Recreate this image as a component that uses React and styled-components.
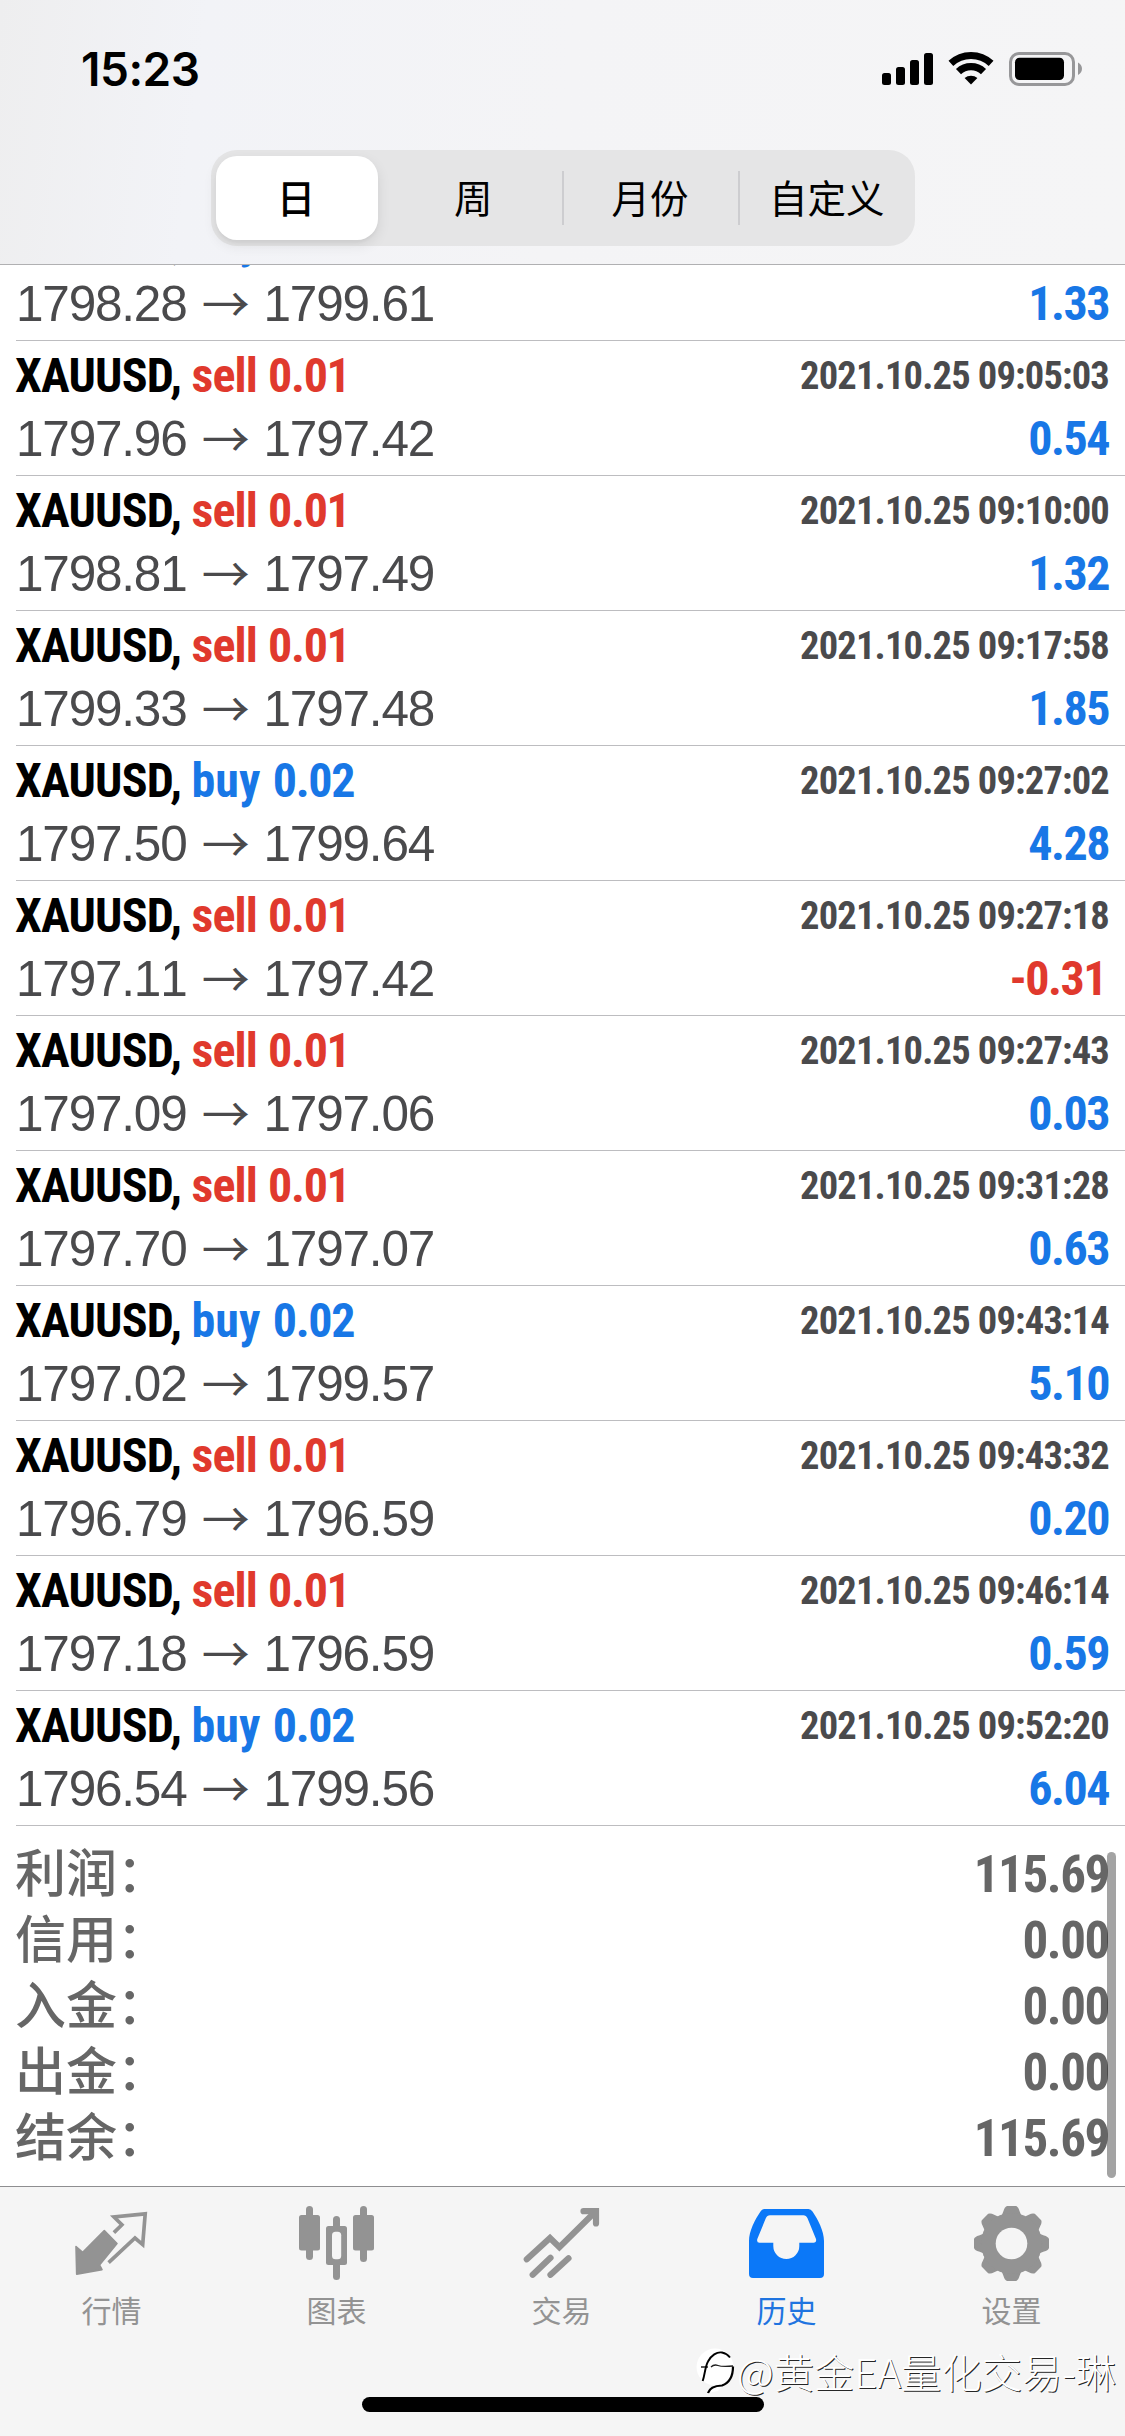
import styled, { createGlobalStyle, css } from 'styled-components';

const BLUE = '#1877e6';
const RED = '#e0392d';

const deals = [
  { side: 'buy', volume: '0.01', open: '1798.28', close: '1799.61', time: '2021.10.25 09:04:20', profit: '1.33' },
  { side: 'sell', volume: '0.01', open: '1797.96', close: '1797.42', time: '2021.10.25 09:05:03', profit: '0.54' },
  { side: 'sell', volume: '0.01', open: '1798.81', close: '1797.49', time: '2021.10.25 09:10:00', profit: '1.32' },
  { side: 'sell', volume: '0.01', open: '1799.33', close: '1797.48', time: '2021.10.25 09:17:58', profit: '1.85' },
  { side: 'buy', volume: '0.02', open: '1797.50', close: '1799.64', time: '2021.10.25 09:27:02', profit: '4.28' },
  { side: 'sell', volume: '0.01', open: '1797.11', close: '1797.42', time: '2021.10.25 09:27:18', profit: '-0.31' },
  { side: 'sell', volume: '0.01', open: '1797.09', close: '1797.06', time: '2021.10.25 09:27:43', profit: '0.03' },
  { side: 'sell', volume: '0.01', open: '1797.70', close: '1797.07', time: '2021.10.25 09:31:28', profit: '0.63' },
  { side: 'buy', volume: '0.02', open: '1797.02', close: '1799.57', time: '2021.10.25 09:43:14', profit: '5.10' },
  { side: 'sell', volume: '0.01', open: '1796.79', close: '1796.59', time: '2021.10.25 09:43:32', profit: '0.20' },
  { side: 'sell', volume: '0.01', open: '1797.18', close: '1796.59', time: '2021.10.25 09:46:14', profit: '0.59' },
  { side: 'buy', volume: '0.02', open: '1796.54', close: '1799.56', time: '2021.10.25 09:52:20', profit: '6.04' },
];

const totals = [
  ['利润：', '115.69'],
  ['信用：', '0.00'],
  ['入金：', '0.00'],
  ['出金：', '0.00'],
  ['结余：', '115.69'],
];

const periods = ['日', '周', '月份', '自定义'];

function StatusIcons() {
  return (
    <svg width="204" height="38" viewBox="0 0 204 38">
      <rect x="2" y="23" width="9" height="12" rx="2.5" />
      <rect x="16" y="17" width="9" height="18" rx="2.5" />
      <rect x="30" y="10" width="9" height="25" rx="2.5" />
      <rect x="44" y="3" width="9" height="32" rx="2.5" />
      <path d="M70.9 13.4A29.5 29.5 0 0 1 111.1 13.4" fill="none" stroke="#000" strokeWidth="7" />
      <path d="M78.5 21.6A18.3 18.3 0 0 1 103.5 21.6" fill="none" stroke="#000" strokeWidth="7.4" />
      <path d="M84.6 28A10 10 0 0 1 97.4 28L91 34.6Z" />
      <rect x="130.5" y="3.5" width="63" height="31" rx="8.5" fill="none" stroke="#979799" strokeWidth="3" />
      <rect x="135" y="7.7" width="49" height="22.3" rx="4.5" />
      <path d="M198 12.5Q202 15 202 18.8T198 25Z" fill="#979799" />
    </svg>
  );
}

const tabs = [
  {
    label: '行情',
    icon: (
      <>
        <path
          d="M5 46.5L11.7 52.3L33.3 30.5L46 43.5L28.5 65L31 69.6L5.7 74.2Z"
          fill="currentColor"
          stroke="currentColor"
          strokeWidth="1.6"
          strokeLinejoin="round"
        />
        <path d="M42.9 32.6L50.9 24.8L43 17L74.2 13.8L71.7 44.6L64 38L37.6 62.6" fill="none" stroke="currentColor" strokeWidth="3.7" />
      </>
    ),
  },
  {
    label: '图表',
    icon: (
      <g fill="currentColor">
        <rect x="10" y="6" width="7" height="54" rx="3.5" />
        <rect x="3" y="15" width="21" height="35.5" rx="2.5" />
        <rect x="37" y="16" width="7" height="64" rx="3.5" />
        <rect x="30" y="26" width="21" height="39" rx="2.5" />
        <rect x="36" y="31.7" width="9.2" height="27.6" rx="3.5" fill="#f5f5f5" />
        <rect x="64" y="6" width="7" height="56" rx="3.5" />
        <rect x="57" y="15" width="21" height="35.5" rx="2.5" />
      </g>
    ),
  },
  {
    label: '交易',
    icon: (
      <g fill="none" stroke="currentColor" strokeWidth="6.2" strokeLinecap="round">
        <path d="M5.8 59.3L29 38L38.4 47.2L73.5 12.5" />
        <path d="M62.5 11.2H75V23.5" />
        <path d="M11.7 74.8L29.5 57.8M29.5 74.8L47.5 58.3" />
      </g>
    ),
  },
  {
    label: '历史',
    active: true,
    icon: (
      <path
        fillRule="evenodd"
        fill="#0b78f8"
        d="M18.5 9H62.5Q65 9 66.5 11.5C72 19.5 78 31 78 41V74Q78 78 74 78H7Q3 78 3 74V41C3 31 9 19.5 14.5 11.5Q16 9 18.5 9ZM24 15.3Q21 15.3 19.8 18.3L11.3 39Q10.4 42.7 13.5 42.7H27.3V46A13 13 0 0 0 53.3 46V42.7H67.5Q70.8 42.7 70 39L61.5 18.3Q60.2 15.3 57.3 15.3Z"
      />
    ),
  },
  {
    label: '设置',
    icon: (
      <g>
        {[0, 45, 90, 135].map((a) => (
          <path
            key={a}
            transform={`rotate(${a} 40.5 43.5)`}
            fill="currentColor"
            d="M36 6H45Q47.5 7 48.500 11L50.500 16L55 30V57L50.500 71L48.500 76Q47.500 80 45 81H36Q33.500 80 32.500 76L30.500 71L26 57V30L30.500 16L32.500 11Q33.500 7 36 6Z"
          />
        ))}
        <circle cx="40.5" cy="43.5" r="30.5" fill="currentColor" />
        <circle cx="40.5" cy="43.5" r="15.8" fill="#f5f5f5" />
      </g>
    ),
  },
];

function App() {
  return (
    <>
      <GlobalStyle />
      <Screen>
        <Header>
          <StatusBar>
            <Clock>15:23</Clock>
            <StatusIcons />
          </StatusBar>
          <Segmented>
            {periods.map((name, i) => (
              <Segment key={name} $active={i === 0} $divided={i > 1}>
                {name}
              </Segment>
            ))}
          </Segmented>
        </Header>

        <History>
          <Deals>
            {deals.map((deal) => (
              <Deal key={deal.time}>
                <Line $height={68}>
                  <Symbol>
                    XAUUSD,{' '}
                    <Side $side={deal.side}>
                      {deal.side} <Volume>{deal.volume}</Volume>
                    </Side>
                  </Symbol>
                  <Time>{deal.time}</Time>
                </Line>
                <Line $height={58}>
                  <Prices>
                    <span>{deal.open}</span>
                    <Arrow>→</Arrow>
                    <span>{deal.close}</span>
                  </Prices>
                  <Profit $loss={deal.profit.startsWith('-')}>{deal.profit}</Profit>
                </Line>
              </Deal>
            ))}
          </Deals>
          <Totals>
            {totals.map(([label, value]) => (
              <Total key={label}>
                <TotalLabel>{label}</TotalLabel>
                <TotalValue>{value}</TotalValue>
              </Total>
            ))}
          </Totals>
          <ScrollThumb />
        </History>

        <TabBar>
          {tabs.map((tab) => (
            <Tab key={tab.label} $active={tab.active}>
              <svg width="83" height="84" viewBox="0 0 83 84">
                {tab.icon}
              </svg>
              <TabLabel>{tab.label}</TabLabel>
            </Tab>
          ))}
          <HomeIndicator />
          <Watermark>
            <svg width="41" height="48" viewBox="0 0 41 48">
              <circle cx="19" cy="20" r="18.5" fill="#fff" />
              <path d="M12 46Q17 37 30 35L22 44Z" fill="#fff" />
              <path d="M5 20H12M15 20Q18 17 22 18.500T37 19" fill="none" stroke="#222" strokeWidth="1.3" />
              <path d="M6.700 34C9 27 9 20 12 14.500C15 8.500 21 4.500 26 5.500Q31 6.500 34 10.500" fill="none" stroke="#000" strokeWidth="1.900" />
              <path d="M37 19.500C37 29 33 36 26 38.500Q14 39 12 46" fill="none" stroke="#000" strokeWidth="2.200" />
            </svg>
            @黄金EA量化交易-琳
          </Watermark>
        </TabBar>
      </Screen>
    </>
  );
}

export default App;

const GlobalStyle = createGlobalStyle`
  * {
    box-sizing: border-box;
  }
  body {
    margin: 0;
    background: #fff;
  }
`;

const condensed = css`
  font-family: 'Roboto Condensed', Roboto, 'Liberation Sans', sans-serif;
  font-weight: 700;
`;

const Screen = styled.div`
  width: 1125px;
  height: 2436px;
  display: flex;
  flex-direction: column;
  overflow: hidden;
  background: #fff;
  font-family: 'Liberation Sans', 'Noto Sans CJK SC', sans-serif;
`;

const Header = styled.header`
  flex: none;
  height: 265px;
  border-bottom: 1px solid #b0b0b2;
  background: linear-gradient(97deg, #eeeeef 0%, #f2f3f7 18%, #f4f4f6 50%, #f5f5f6 100%);
`;

const StatusBar = styled.div`
  height: 150px;
  padding: 50px 41px 0 81px;
  display: flex;
  align-items: flex-start;
  justify-content: space-between;
`;

const Clock = styled.div`
  font: 600 46px/38px Inter, sans-serif;
  letter-spacing: -0.5px;
`;

const Segmented = styled.div`
  width: 704px;
  height: 96px;
  margin-left: 211px;
  padding: 6px 0 6px 5px;
  display: flex;
  align-items: center;
  border-radius: 26px;
  background: #e5e5e6;
`;

const Segment = styled.div`
  flex: 1;
  height: 54px;
  padding: 0 2px 4px 0;
  display: flex;
  align-items: center;
  justify-content: center;
  font: 400 38.5px/50px 'Noto Sans CJK SC', sans-serif;
  color: #000;
  border-left: 2px solid ${(p) => (p.$divided ? '#cdcdd0' : 'transparent')};
  ${(p) =>
    p.$active &&
    css`
      flex: none;
      width: 162px;
      height: 84px;
      margin-right: 7px;
      border: 0;
      border-radius: 21px;
      background: #fff;
      box-shadow: 0 5px 14px rgba(0, 0, 0, 0.09), 0 3px 3px rgba(0, 0, 0, 0.03);
      font-weight: 500;
    `}
`;

const History = styled.main`
  flex: 1;
  position: relative;
  overflow: hidden;
`;

const Deals = styled.div`
  margin-top: -59px;
  padding-left: 16px;
`;

const Deal = styled.div`
  height: 135px;
  padding-right: 16px;
  border-bottom: 1px solid #bdbdc0;
`;

const Line = styled.div`
  height: ${(p) => p.$height}px;
  display: flex;
  align-items: center;
  justify-content: space-between;
  white-space: nowrap;
`;

const Symbol = styled.div`
  ${condensed}
  margin-left: -1px;
  font-size: 48px;
  letter-spacing: -0.8px;
  color: #000;
`;

const Side = styled.span`
  letter-spacing: ${(p) => (p.$side === 'sell' ? '-0.9px' : '0.1px')};
  word-spacing: 1px;
  color: ${(p) => (p.$side === 'sell' ? RED : BLUE)};
`;

const Volume = styled.span`
  letter-spacing: -1.3px;
`;

const Time = styled.div`
  ${condensed}
  font-size: 38.5px;
  letter-spacing: -0.83px;
  color: #4a4a4c;
`;

const Prices = styled.div`
  padding-top: 2px;
  display: flex;
  align-items: center;
  color: #4a4a4c;
  font: 400 49.5px/58px 'Liberation Sans', sans-serif;
  font-kerning: none;
  letter-spacing: -1.2px;
`;

const Arrow = styled.span`
  width: 77px;
  padding-bottom: 5px;
  text-align: center;
  font: 400 48px/53px 'Noto Sans CJK SC', sans-serif;
`;

const Profit = styled.div`
  ${condensed}
  margin-right: ${(p) => (p.$loss ? '3px' : 0)};
  font-size: 48px;
  letter-spacing: -1.5px;
  color: ${(p) => (p.$loss ? RED : BLUE)};
`;

const Totals = styled.div`
  padding: 15px 16px 0 15px;
`;

const Total = styled.div`
  height: 66px;
  display: flex;
  align-items: center;
  justify-content: space-between;
  color: #666;
`;

const TotalLabel = styled.div`
  padding-bottom: 8px;
  font: 500 51px/58px 'Noto Sans CJK SC', sans-serif;
`;

const TotalValue = styled.div`
  ${condensed}
  font-size: 51px;
  letter-spacing: -1.4px;
`;

const ScrollThumb = styled.div`
  position: absolute;
  top: 1587px;
  right: 9px;
  width: 9px;
  height: 326px;
  border-radius: 5px;
  background: rgba(0, 0, 0, 0.36);
`;

const TabBar = styled.nav`
  flex: none;
  position: relative;
  height: 250px;
  display: flex;
  border-top: 1px solid #8e8e90;
  background: #f5f5f5;
`;

const Tab = styled.div`
  flex: 1;
  padding-top: 13px;
  display: flex;
  flex-direction: column;
  align-items: center;
  color: ${(p) => (p.$active ? '#1f74e0' : '#939393')};
`;

const TabLabel = styled.span`
  padding-right: 2px;
  font: 400 30px/51px 'Noto Sans CJK SC', sans-serif;
`;

const HomeIndicator = styled.div`
  position: absolute;
  left: 362px;
  bottom: 24px;
  width: 402px;
  height: 15px;
  border-radius: 8px;
  background: #000;
`;

const Watermark = styled.div`
  position: absolute;
  right: 9px;
  bottom: 37px;
  display: flex;
  align-items: center;
  white-space: nowrap;
  color: #fff;
  font: 300 40.3px/56px 'Noto Sans CJK SC', sans-serif;
  text-shadow: 1px 1px 0.5px rgba(0, 0, 0, 0.85);
`;
